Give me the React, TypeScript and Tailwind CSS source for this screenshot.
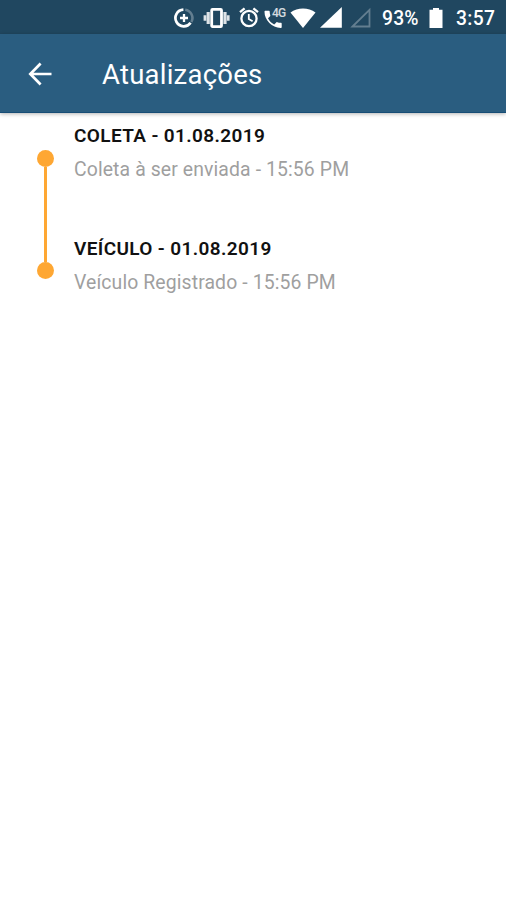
const timeline = [
  { title: "COLETA - 01.08.2019", detail: "Coleta à ser enviada - 15:56 PM" },
  { title: "VEÍCULO - 01.08.2019", detail: "Veículo Registrado - 15:56 PM" },
];

function DataSaverIcon() {
  return (
    <svg className="ml-[174px] h-5 w-5 shrink-0" viewBox="0 0 20 20" fill="none">
      <path d="M11.2 1.7a8.4 8.4 0 0 1 6.2 12.3" stroke="#fff" strokeOpacity=".3" strokeWidth="2.6" />
      <path d="M9.4 1.7a8.3 8.3 0 1 0 7.2 13" stroke="#fff" strokeWidth="2.7" />
      <path d="M10 6v8M6 10h8" stroke="#fff" strokeWidth="2.3" />
    </svg>
  );
}

function VibrateIcon() {
  return (
    <svg className="ml-[9px] h-5 w-[27px] shrink-0" viewBox="0 0 27 20" fill="none" stroke="#fff">
      <rect x="8.7" y="1.4" width="9.8" height="17.2" rx=".8" strokeWidth="2.8" />
      <path d="M5.2 4v12M22 4v12" strokeWidth="3.2" strokeOpacity=".85" />
      <path d="M2 7.2v5.6M25.2 7.2v5.6" strokeWidth="2.8" strokeOpacity=".85" />
    </svg>
  );
}

function AlarmIcon() {
  return (
    <svg className="ml-[9px] h-[21px] w-5 shrink-0" viewBox="0 0 20 21" fill="none" stroke="#fff">
      <circle cx="10" cy="11.5" r="7.6" strokeWidth="2.3" />
      <path d="M1 5.2 5.6 1.3M19 5.2l-4.6-3.9" strokeWidth="2.3" />
      <path d="M9.8 7v5l3.8 2.3" strokeWidth="1.8" />
    </svg>
  );
}

function CallIcon() {
  return (
    <div className="relative ml-[5px] h-5 w-[22px] shrink-0">
      <svg className="h-5 w-[22px]" viewBox="0 0 22 20" fill="#fff">
        <path d="M1.5 2.8h3.2c.6 0 1 .4 1 1 0 1.2.2 2.3.6 3.4.1.4 0 .8-.2 1L4 10.3c1.4 2.7 3.5 4.9 6.2 6.2l2.1-2.1c.3-.3.7-.4 1-.2 1.1.4 2.2.6 3.4.6.6 0 1 .4 1 1v3.1c0 .6-.4 1-1 1C8.1 19.9.5 12.3.5 3.8c0-.6.4-1 1-1Z" />
      </svg>
      <span className="absolute -top-px left-[8px] text-[12px] font-medium leading-[12px] tracking-[-0.8px] text-white/80">4G</span>
    </div>
  );
}

function SignalIcons() {
  return (
    <>
      <svg className="ml-1 h-5 w-[26px] shrink-0" viewBox="0 0 26 20" fill="#fff">
        <path d="M.5 4.5C7.5-.8 18.5-.8 25.5 4.5L13 20Z" />
      </svg>
      <svg className="ml-[4px] h-[21px] w-[22px] shrink-0" viewBox="0 0 22 21" fill="#fff">
        <path d="M0 20.8 21.8 0v20.8Z" />
      </svg>
      <svg className="ml-[8px] h-[21px] w-[22px] shrink-0" viewBox="0 0 22 21" fill="none" stroke="#fff" strokeOpacity=".3" strokeWidth="1.8">
        <path d="M2.5 19.5 19.5 2.8v16.7Z" />
      </svg>
    </>
  );
}

function StatusBar() {
  return (
    <div className="flex h-[34px] items-center bg-[#204760] pt-px text-white">
      <DataSaverIcon />
      <VibrateIcon />
      <AlarmIcon />
      <CallIcon />
      <SignalIcons />
      <span className="ml-[10px] mt-[2px] w-[38px] whitespace-nowrap text-[19.3px] font-medium leading-5 tracking-[0.2px]">93%</span>
      <svg className="ml-[9px] h-5 w-[14px] shrink-0" viewBox="0 0 14 20" fill="#fff">
        <path d="M4 0h6v1.8h3.5V20H.5V1.8H4Z" />
      </svg>
      <span className="ml-[13px] mt-[2px] whitespace-nowrap text-[19.3px] font-medium leading-5 tracking-[0.3px]">3:57</span>
    </div>
  );
}

export default function App() {
  return (
    <div className="h-[900px] w-[506px] overflow-hidden bg-white font-['Roboto',sans-serif]">
      <StatusBar />
      <header className="flex h-[79px] items-center border-b border-[#174d76] bg-[#2a5d80] pt-px text-white shadow-[0_1px_4px_rgba(0,0,0,0.3)]">
        <svg className="ml-[28px] h-6 w-6 shrink-0" viewBox="0 0 24 24" fill="none" stroke="#fff" strokeWidth="2.7">
          <path d="M23.5 12H3M12.6 1.5 2.3 12l10.3 10.5" />
        </svg>
        <h1 className="ml-[50px] mt-[2px] text-[27.5px] leading-8 tracking-[0.23px]">Atualizações</h1>
      </header>
      <main className="flex pt-[9px]">
        <div className="ml-[37px] mt-[28px] flex h-[129px] w-[17px] flex-col items-center">
          <span className="h-[17px] w-[17px] rounded-full bg-[#fea733]" />
          <span className="w-[2.5px] grow bg-[#fea733]" />
          <span className="h-[17px] w-[17px] rounded-full bg-[#fea733]" />
        </div>
        <div className="ml-5 flex flex-col gap-[51px]">
          {timeline.map((entry) => (
            <section key={entry.title} className="h-[62px] whitespace-nowrap">
              <h2 className="text-[19px] font-semibold leading-7 tracking-[0.37px] text-[#111]">{entry.title}</h2>
              <p className="mt-[6px] text-[19.4px] leading-7 tracking-[0.11px] text-[#9f9f9f]">{entry.detail}</p>
            </section>
          ))}
        </div>
      </main>
    </div>
  );
}
